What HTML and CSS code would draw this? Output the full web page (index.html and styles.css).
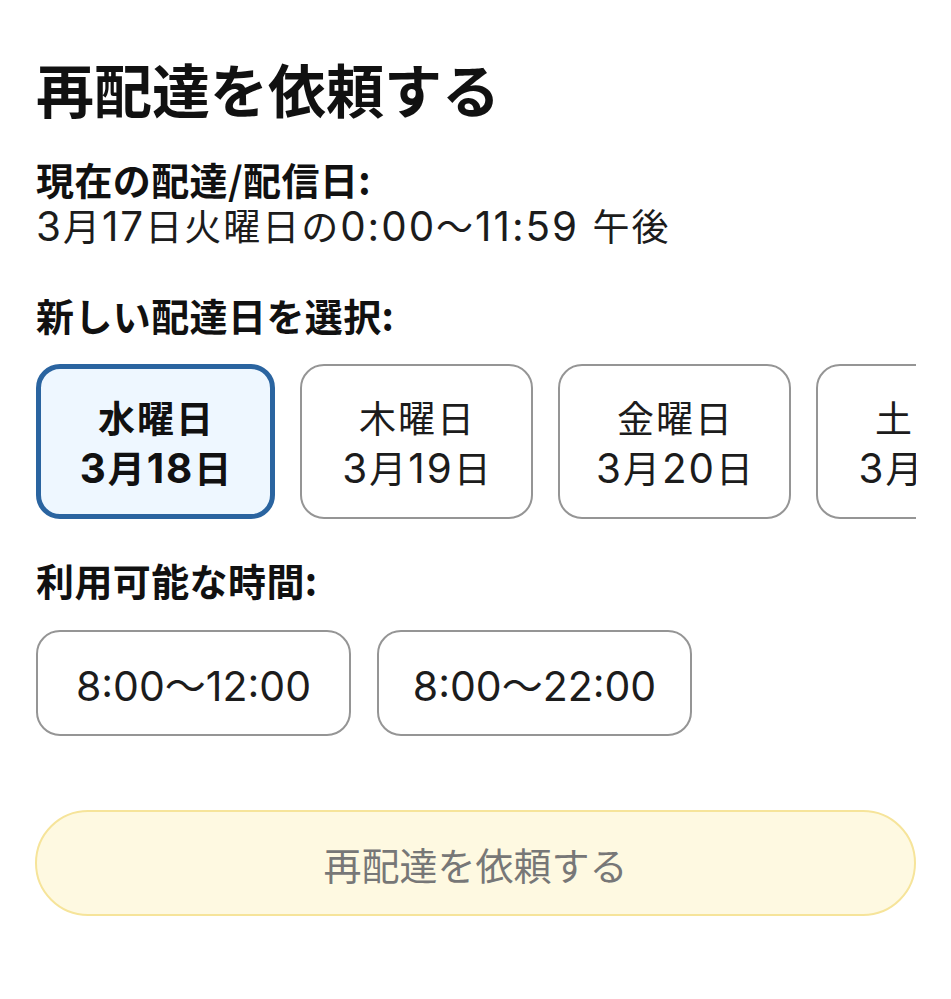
FILE: index.html
```html
<!DOCTYPE html>
<html lang="ja">
<head>
<meta charset="utf-8">
<link rel="stylesheet" href="styles.css">
</head>
<body>
<main class="page">
  <h1 class="title">再配達を依頼する</h1>
  <section class="current">
    <div class="label">現在の配達/配信日:</div>
    <div class="value"><span class="n">3</span>月<span class="n">17</span>日火曜日の<span class="n">0:00</span>〜<span class="n">11:59 </span>午後</div>
  </section>
  <section class="pick">
    <div class="label">新しい配達日を選択:</div>
    <div class="dates">
      <button class="date selected"><span>水曜日</span><span><span class="n">3</span>月<span class="n">18</span>日</span></button>
      <button class="date"><span>木曜日</span><span><span class="n">3</span>月<span class="n">19</span>日</span></button>
      <button class="date"><span>金曜日</span><span><span class="n">3</span>月<span class="n">20</span>日</span></button>
      <button class="date"><span>土曜日</span><span><span class="n">3</span>月<span class="n">21</span>日</span></button>
    </div>
  </section>
  <section class="pick second">
    <div class="label">利用可能な時間:</div>
    <div class="times">
      <button class="time">8:00〜12:00</button>
      <button class="time">8:00〜22:00</button>
    </div>
  </section>
  <button class="submit">再配達を依頼する</button>
</main>
</body>
</html>
```

FILE: styles.css
```css
html, body {
  margin: 0;
  padding: 0;
  background: #ffffff;
}
body {
  font-family: "Noto Sans CJK JP", "Noto Sans", sans-serif;
  color: #141414;
}
.page {
  padding: 50px 35px 0 36px;
}
.title {
  margin: 0;
  font-size: 58px;
  line-height: 76px;
  font-weight: 700;
  color: #111;
}
.current {
  margin-top: 30px;
}
.label {
  font-size: 38px;
  font-weight: 700;
  line-height: 46px;
  height: 46px;
  color: #111;
  letter-spacing: 0.4px;
}
.value {
  font-size: 37px;
  font-weight: 400;
  line-height: 46px;
  height: 46px;
  color: #1c1c1c;
  white-space: nowrap;
  letter-spacing: 2px;
}
.n {
  font-family: "Inter", "Liberation Sans", sans-serif;
  font-size: 1.09em;
}
.pick {
  margin-top: 44px;
}
.pick.second {
  margin-top: 38px;
}
.dates {
  margin-top: 26px;
  display: flex;
  gap: 25px;
  overflow: hidden;
  width: 880px;
}
.date {
  flex: 0 0 auto;
  width: 233px;
  height: 155px;
  box-sizing: border-box;
  border: 2px solid #959595;
  border-radius: 24px;
  background: #fff;
  font-family: inherit;
  font-size: 37px;
  line-height: 50px;
  letter-spacing: 2px;
  color: #1c1c1c;
  display: flex;
  flex-direction: column;
  align-items: center;
  justify-content: center;
  padding: 0 0 0 2px;
}
.date > span {
  display: block;
  height: 50px;
  white-space: nowrap;
}
.date.selected {
  width: 239px;
  border: 5px solid #2a64a0;
  background: #eef7ff;
  font-weight: 700;
  color: #111;
}
.times {
  margin-top: 27px;
  display: flex;
  gap: 26px;
}
.time {
  width: 315px;
  height: 106px;
  box-sizing: border-box;
  border: 2px solid #959595;
  border-radius: 24px;
  background: #fff;
  font-family: "Inter", "Noto Sans CJK JP", sans-serif;
  font-size: 41px;
  color: #1c1c1c;
  padding: 0;
}
.submit {
  display: block;
  margin-top: 74px;
  margin-left: -1px;
  width: 881px;
  height: 106px;
  box-sizing: border-box;
  border: 2px solid #f6e49a;
  border-radius: 53px;
  background: #fef9e1;
  font-family: inherit;
  font-size: 38px;
  color: #777;
  padding: 0;
}
```
